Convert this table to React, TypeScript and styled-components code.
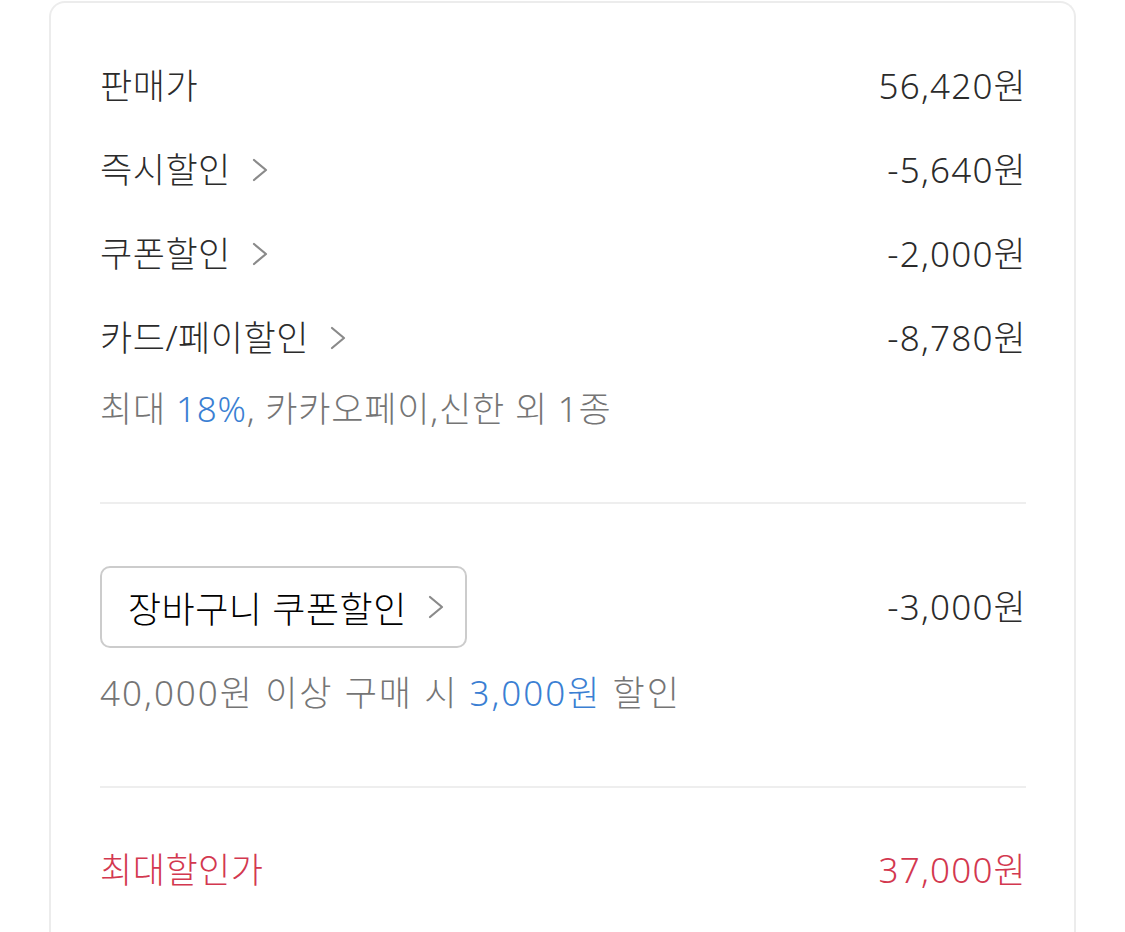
import React from 'react';
import styled, { createGlobalStyle } from 'styled-components';

const GlobalStyle = createGlobalStyle`
  html, body {
    margin: 0;
    padding: 0;
    background: #ffffff;
  }
  body {
    font-family: 'Noto Sans', 'Noto Sans CJK KR', sans-serif;
    color: #2b2b2b;
  }
`;

type Line = { label: string; amount: string; link?: boolean };

const lines: Line[] = [
  { label: '판매가', amount: '56,420원' },
  { label: '즉시할인', amount: '-5,640원', link: true },
  { label: '쿠폰할인', amount: '-2,000원', link: true },
  { label: '카드/페이할인', amount: '-8,780원', link: true },
];

const Chevron = () => (
  <svg width="18" height="30" viewBox="0 0 18 30" fill="none">
    <path d="M3 5l12 10-12 10" stroke="#8a8a8a" strokeWidth="2.2" strokeLinecap="round" strokeLinejoin="round" />
  </svg>
);

const App = () => {
  return (
    <Page>
      <GlobalStyle />
      <Card>
        {lines.map((line) => (
          <Row key={line.label}>
            <Label>
              {line.label}
              {line.link && <Chevron />}
            </Label>
            <Amount>{line.amount}</Amount>
          </Row>
        ))}
        <Note>
          최대 <Blue>18%</Blue>, 카카오페이,신한 외 1종
        </Note>
        <Divider />
        <CouponRow>
          <CouponButton>
            장바구니 쿠폰할인
            <Chevron />
          </CouponButton>
          <Amount>-3,000원</Amount>
        </CouponRow>
        <Note $gap={25} $spacing={2}>
          40,000원 이상 구매 시 <Blue>3,000원</Blue> 할인
        </Note>
        <Divider />
        <Row $red>
          <Label>최대할인가</Label>
          <Amount>37,000원</Amount>
        </Row>
      </Card>
    </Page>
  );
};

export default App;

const Page = styled.div`
  padding: 1px 49px 0 49px;
  height: 931px;
  overflow: hidden;
`;
const Card = styled.div`
  border: 2px solid #ececec;
  border-bottom: none;
  border-radius: 16px 16px 0 0;
  padding: 41px 48px 0 49px;
  min-height: 1000px;
`;
const Row = styled.div<{ $red?: boolean }>`
  display: flex;
  justify-content: space-between;
  align-items: center;
  height: 84px;
  font-size: 35px;
  font-weight: 300;
  color: ${({ $red }) => ($red ? '#d3384f' : '#2b2b2b')};
`;
const Label = styled.span`
  display: flex;
  align-items: center;
  gap: 20px;
  line-height: 40px;
  letter-spacing: 0.5px;
`;
const Amount = styled.span`
  line-height: 40px;
  font-size: 35px;
  font-weight: 300;
  letter-spacing: 1.2px;
  margin-right: -1px;
`;
const Note = styled.div<{ $gap?: number; $spacing?: number }>`
  margin-top: ${({ $gap }) => $gap ?? 9}px;
  font-size: 35px;
  font-weight: 300;
  line-height: 40px;
  letter-spacing: ${({ $spacing }) => $spacing ?? 0.8}px;
  color: #757575;
`;
const Blue = styled.span`
  color: #3b7fd3;
`;
const Divider = styled.div`
  height: 2px;
  background: #eeeeee;
  margin: 73px 0 0;
  & + ${Row} {
    margin-top: 40px;
  }
`;
const CouponRow = styled.div`
  display: flex;
  justify-content: space-between;
  align-items: center;
  margin-top: 62px;
  color: #2b2b2b;
`;
const CouponButton = styled.button`
  display: flex;
  align-items: center;
  gap: 20px;
  height: 82px;
  padding: 0 20px 0 26px;
  border: 2px solid #cccccc;
  border-radius: 10px;
  background: #ffffff;
  font-family: inherit;
  font-size: 36px;
  font-weight: 300;
  letter-spacing: 0.5px;
  color: #000000;
  cursor: pointer;
`;
